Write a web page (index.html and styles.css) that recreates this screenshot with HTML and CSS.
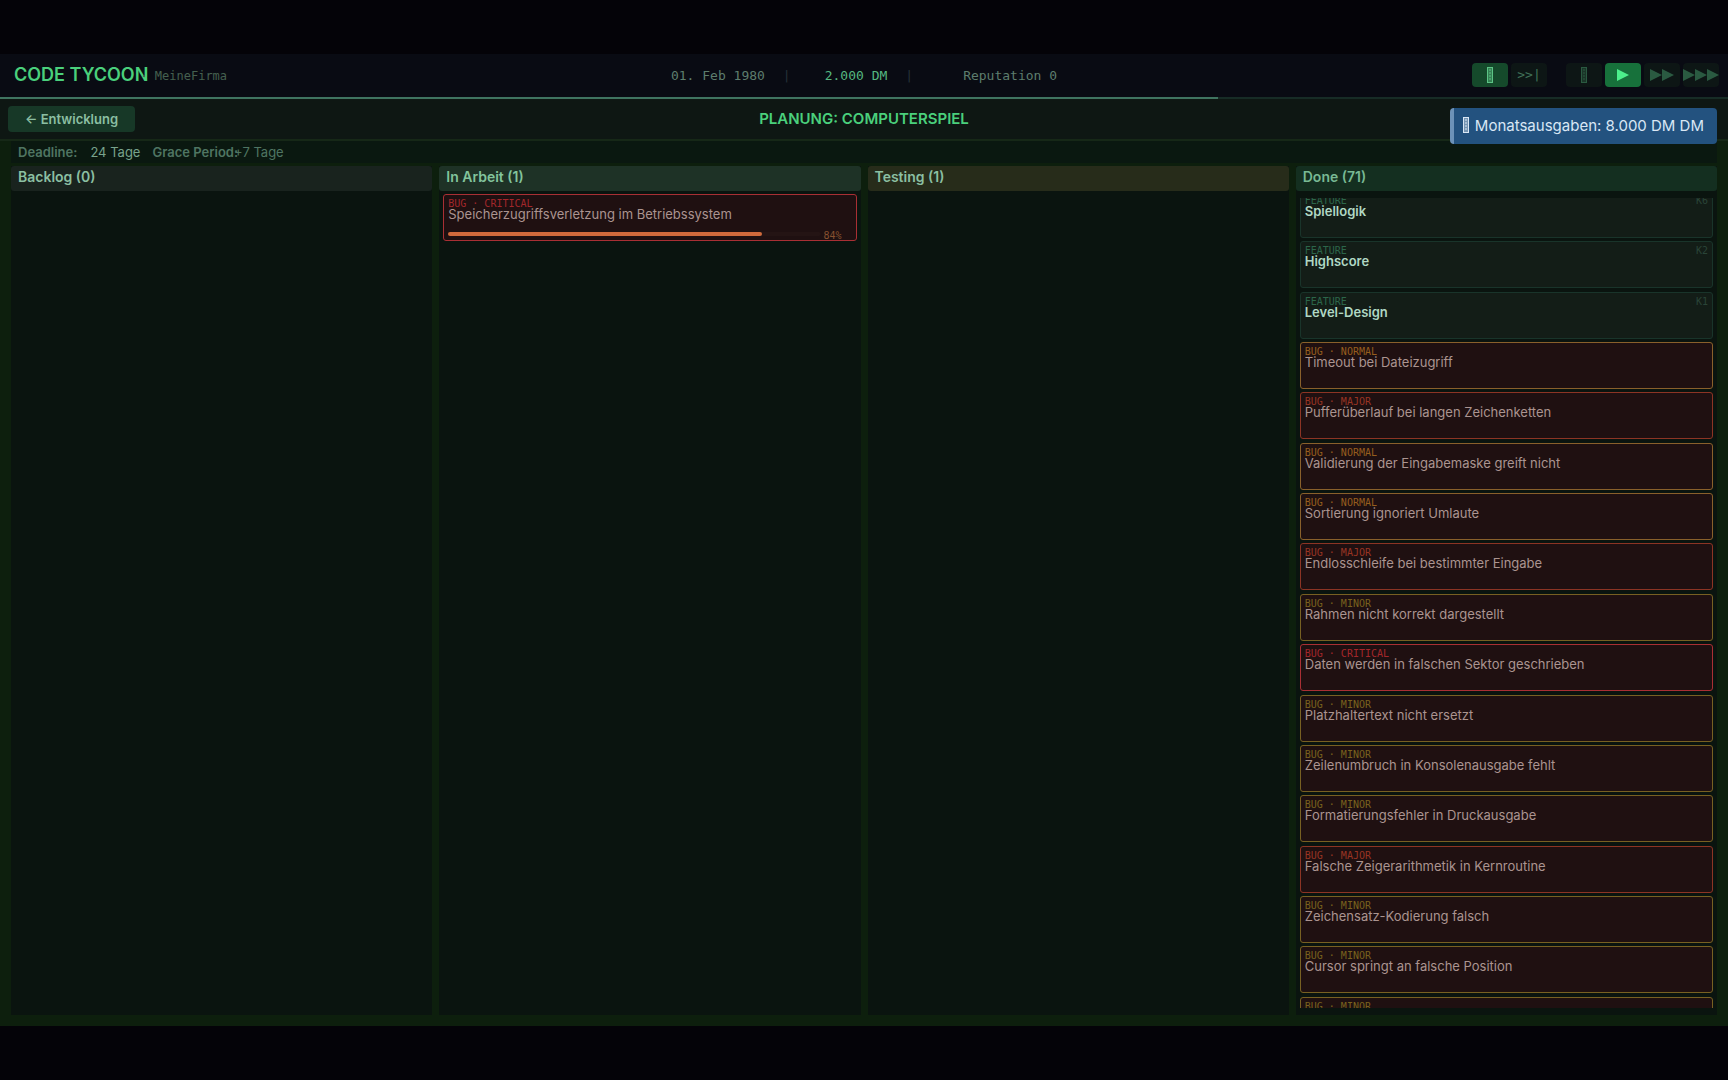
FILE: index.html
```html
<!DOCTYPE html>
<html lang="de">
<head>
    <meta charset="UTF-8">
    <meta name="viewport" content="width=device-width, initial-scale=1.0">
    <title>Code Tycoon</title>
    <link rel="stylesheet" href="styles.css">
</head>
<body>
    <svg width="0" height="0" class="defs">
        <!-- Pause glyph shared by buttons and toast -->
        <symbol id="block" viewBox="0 0 6 16">
            <rect x="0.5" y="0.5" width="5" height="15" fill="currentColor" fill-opacity="0.45" stroke="currentColor" />
            <path d="M3 2V14" stroke="currentColor" stroke-dasharray="2 1" />
        </symbol>
        <symbol id="play" viewBox="0 0 12 12">
            <path d="M0 0L12 6L0 12Z" fill="currentColor" />
        </symbol>
    </svg>

    <div class="game">
        <header class="topbar">
            <div class="brand">
                <h1>CODE TYCOON</h1>
                <span class="company">· MeineFirma</span>
            </div>
            <div class="stats">
                <span>01. Feb 1980</span>
                <span class="sep">|</span>
                <span class="money">2.000 DM</span>
                <span class="sep">|</span>
                <span class="reputation">Reputation 0</span>
            </div>
            <div class="controls">
                <button type="button" class="ctrl on" aria-label="Auto-Pause"><svg class="block"><use href="#block" /></svg></button>
                <button type="button" class="ctrl skip">&gt;&gt;|</button>
                <button type="button" class="ctrl gap" aria-label="Pause"><svg class="block"><use href="#block" /></svg></button>
                <button type="button" class="ctrl active" aria-label="Play"><svg class="play"><use href="#play" /></svg></button>
                <button type="button" class="ctrl" aria-label="Schnell"><svg class="play"><use href="#play" /></svg><svg class="play"><use href="#play" /></svg></button>
                <button type="button" class="ctrl" aria-label="Sehr schnell"><svg class="play"><use href="#play" /></svg><svg class="play"><use href="#play" /></svg><svg class="play"><use href="#play" /></svg></button>
            </div>
        </header>
        <div class="month"><div class="month-fill" style="width: 70.5%"></div></div>

        <div class="subbar">
            <button type="button" class="back">← Entwicklung</button>
            <h2>PLANUNG: COMPUTERSPIEL</h2>
        </div>

        <main class="board">
            <div class="info">
                <b>Deadline:</b><span class="days">24 Tage</span>
                <b>Grace Period:</b><span class="grace">+7 Tage</span>
            </div>
            <div class="columns">
                <section class="column">
                    <h3>Backlog (0)</h3>
                    <div class="list"></div>
                </section>

                <section class="column doing">
                    <h3>In Arbeit (1)</h3>
                    <div class="list">
                        <article class="card bug critical">
                            <small>BUG · CRITICAL</small>
                            <p>Speicherzugriffsverletzung im Betriebssystem</p>
                            <div class="progress">
                                <div class="track"><div class="fill" style="width: 84%"></div></div>
                                <span>84%</span>
                            </div>
                        </article>
                    </div>
                </section>

                <section class="column testing">
                    <h3>Testing (1)</h3>
                    <div class="list"></div>
                </section>

                <section class="column done">
                    <h3>Done (71)</h3>
                    <div class="list">
                        <div class="stack">
                            <article class="card feature"><small>FEATURE<span>K6</span></small><p>Spiellogik</p></article>
                            <article class="card feature"><small>FEATURE<span>K2</span></small><p>Highscore</p></article>
                            <article class="card feature"><small>FEATURE<span>K1</span></small><p>Level-Design</p></article>
                            <article class="card bug normal"><small>BUG · NORMAL</small><p>Timeout bei Dateizugriff</p></article>
                            <article class="card bug major"><small>BUG · MAJOR</small><p>Pufferüberlauf bei langen Zeichenketten</p></article>
                            <article class="card bug normal"><small>BUG · NORMAL</small><p>Validierung der Eingabemaske greift nicht</p></article>
                            <article class="card bug normal"><small>BUG · NORMAL</small><p>Sortierung ignoriert Umlaute</p></article>
                            <article class="card bug major"><small>BUG · MAJOR</small><p>Endlosschleife bei bestimmter Eingabe</p></article>
                            <article class="card bug minor"><small>BUG · MINOR</small><p>Rahmen nicht korrekt dargestellt</p></article>
                            <article class="card bug critical"><small>BUG · CRITICAL</small><p>Daten werden in falschen Sektor geschrieben</p></article>
                            <article class="card bug minor"><small>BUG · MINOR</small><p>Platzhaltertext nicht ersetzt</p></article>
                            <article class="card bug minor"><small>BUG · MINOR</small><p>Zeilenumbruch in Konsolenausgabe fehlt</p></article>
                            <article class="card bug minor"><small>BUG · MINOR</small><p>Formatierungsfehler in Druckausgabe</p></article>
                            <article class="card bug major"><small>BUG · MAJOR</small><p>Falsche Zeigerarithmetik in Kernroutine</p></article>
                            <article class="card bug minor"><small>BUG · MINOR</small><p>Zeichensatz-Kodierung falsch</p></article>
                            <article class="card bug minor"><small>BUG · MINOR</small><p>Cursor springt an falsche Position</p></article>
                            <article class="card bug minor"><small>BUG · MINOR</small></article>
                        </div>
                    </div>
                </section>
            </div>
        </main>

        <div class="toast" role="status"><svg class="block"><use href="#block" /></svg>Monatsausgaben: 8.000 DM DM</div>
    </div>
</body>
</html>
```
FILE: styles.css
```css
:root {
    --green: #4ad07c;
    --soft-green: #8bbfa2;
    --frame: #0d1f0d;
    --panel: #0a140f;
    --mono: "DejaVu Sans Mono", monospace;
}

* {
    box-sizing: border-box;
    margin: 0;
    padding: 0;
}

body {
    background: #040308;
    font-family: Inter, sans-serif;
    padding: 54px 0;
}

button {
    font-family: inherit;
    border: none;
    cursor: pointer;
}

.defs {
    position: absolute;
}

.game {
    position: relative;
    display: flex;
    flex-direction: column;
    height: calc(100vh - 108px);
    background: var(--frame);
}

/* Top bar */
.topbar {
    display: grid;
    grid-template-columns: 1fr auto 1fr;
    align-items: center;
    height: 43px;
    flex: none;
    padding: 0 9px;
    background: #090b13;
}

.brand {
    display: flex;
    align-items: center;
    padding-left: 5px;
}

h1 {
    color: var(--green);
    font-size: 18px;
    font-weight: 600;
    line-height: 20px;
    padding-bottom: 2px;
}

.company {
    margin-left: -8px;
    color: #45604f;
    font: 12px var(--mono);
}

.stats {
    display: flex;
    gap: 18px;
    color: #5d7d6d;
    font: 13px var(--mono);
}

.sep {
    color: #253238;
}

.money {
    padding-left: 16px;
    color: #55b780;
}

.reputation {
    padding-left: 32px;
}

.controls {
    display: flex;
    justify-content: flex-end;
    gap: 3px;
    padding-bottom: 2px;
}

.ctrl {
    display: flex;
    align-items: center;
    justify-content: center;
    width: 36px;
    height: 24px;
    border-radius: 4px;
    background: #0d1615;
    color: #2a5a41;
}

.ctrl.on {
    background: #154a2b;
    color: #5cc485;
}

.ctrl.active {
    background: #17713b;
    color: #4cf08b;
}

.ctrl.skip {
    color: #407158;
    font: 13px var(--mono);
}

.ctrl.gap {
    margin-left: 16px;
}

.block {
    width: 6px;
    height: 16px;
    flex: none;
}

.play {
    width: 12px;
    height: 12px;
    flex: none;
}

.month {
    flex: none;
    height: 2px;
    background: #172c26;
}

.month-fill {
    height: 100%;
    background: #3f7460;
}

/* Title bar */
.subbar {
    display: grid;
    grid-template-columns: 1fr auto 1fr;
    align-items: center;
    flex: none;
    height: 42px;
    padding: 0 8px;
    background: #0e1713;
    border-bottom: 2px solid #162817;
}

.back {
    justify-self: start;
    height: 26px;
    padding: 0 17px;
    border-radius: 4px;
    background: #173827;
    color: var(--soft-green);
    font-size: 13px;
    font-weight: 600;
}

h2 {
    color: var(--green);
    font-size: 15px;
    font-weight: 600;
    line-height: 20px;
}

/* Board */
.board {
    display: flex;
    flex: 1;
    flex-direction: column;
    min-height: 0;
    padding: 0 11px 11px;
}

.info {
    display: flex;
    flex: none;
    height: 25px;
    padding: 2px 7px;
    background: #0a1810;
    border-bottom: 3px solid var(--frame);
    color: #4f7562;
    font-size: 13px;
    line-height: 18px;
}

.info b {
    font-weight: 600;
}

.days {
    margin: 0 12px 0 13px;
    color: #78a38c;
}

.grace {
    margin-left: -4px;
}

.columns {
    display: grid;
    flex: 1;
    grid-template-columns: repeat(4, minmax(0, 1fr));
    gap: 7px;
    min-height: 0;
}

.column {
    display: flex;
    flex-direction: column;
    min-height: 0;
    background: var(--panel);
}

h3 {
    flex: none;
    height: 25px;
    padding: 0 7px;
    border-radius: 3px;
    background: #19231e;
    color: var(--soft-green);
    font-size: 14px;
    font-weight: 600;
    line-height: 22px;
}

.doing h3 {
    background: #1e3226;
    color: #82c49c;
}

.testing h3 {
    background: #272c1a;
}

.done h3 {
    background: #142f20;
    color: #78b994;
}

.list {
    flex: 1;
    min-height: 0;
    margin: 3px 4px 0;
    overflow: hidden;
}

.done .list {
    margin: 7px 4px;
}

/* list scrolled down to the latest entries */
.stack {
    display: grid;
    grid-auto-rows: 1fr;
    gap: 3px;
    height: calc(100% + 43px);
    margin-top: -7px;
}

.card {
    height: 47px;
    padding: 3px 4px;
    border: 1px solid;
    border-radius: 3px;
}

.card small {
    display: flex;
    justify-content: space-between;
    height: 8px;
    font: 10px/12px var(--mono);
}

.card p {
    font-size: 13px;
    line-height: 16px;
}

.feature {
    border-color: #19342a;
    background: #131d17;
}

.feature small {
    color: #2c664a;
}

.feature small span {
    color: #2a4437;
}

.feature p {
    color: #b0d8c4;
    font-weight: 600;
}

.bug {
    background: #1f1011;
}

.bug p {
    color: #ab9490;
}

.critical {
    border-color: #a92f34;
}

.critical small {
    color: #a3272b;
}

.major {
    border-color: #8c3424;
}

.major small {
    color: #983423;
}

.normal {
    border-color: #89602b;
}

.normal small {
    color: #965e1e;
}

.minor {
    border-color: #776022;
}

.minor small {
    color: #79611d;
}

.progress {
    display: flex;
    gap: 2px;
    padding: 8px 10px 0 0;
    color: #87502f;
    font: 10px/12px var(--mono);
}

.track {
    flex: 1;
    height: 4px;
    margin-top: 2px;
    border-radius: 2px;
    background: #241414;
}

.fill {
    height: 100%;
    border-radius: 2px;
    background: #d06a3c;
}

/* Toast */
.toast {
    position: absolute;
    top: 54px;
    right: 11px;
    display: flex;
    align-items: center;
    gap: 6px;
    height: 36px;
    padding: 0 13px 2px 9px;
    border-left: 4px solid #6c92b8;
    border-radius: 4px;
    background: #23527f;
    color: #d9e7f5;
    font-size: 15px;
}
```
